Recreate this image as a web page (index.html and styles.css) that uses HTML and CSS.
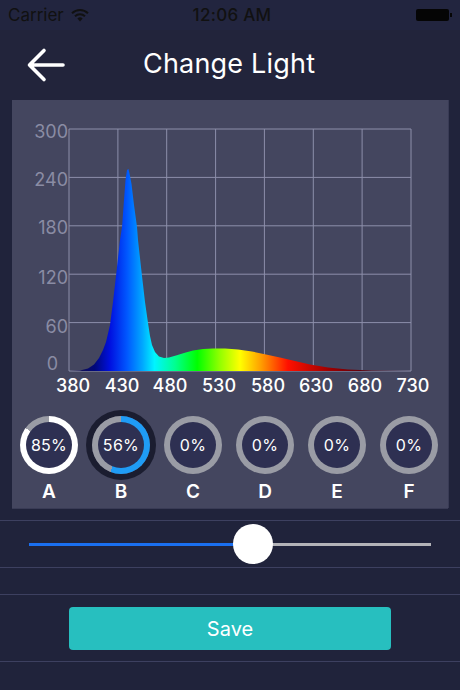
FILE: index.html
```html
<!DOCTYPE html>
<html lang="en">
  <head>
    <meta http-equiv="Content-Type" content="text/html;charset=utf-8" />
    <meta name="viewport" content="width=device-width, initial-scale=1.0" />
    <title>Change Light</title>
    <link rel="stylesheet" href="styles.css">
  </head>
  <body>
    <div class="status-bar">
      <span class="status-bar__carrier">
        Carrier
        <svg class="status-bar__wifi" viewBox="0 0 18 14" width="18" height="14">
          <path d="M1 5.2a11.5 11.5 0 0 1 16 0" fill="none" stroke="#111" stroke-width="2" />
          <path d="M4 8.2a7.2 7.2 0 0 1 10 0" fill="none" stroke="#111" stroke-width="2" />
          <path d="M9 13.5l-2.6-2.9a3.6 3.6 0 0 1 5.2 0z" fill="#111" />
        </svg>
      </span>
      <span class="status-bar__time">12:06 AM</span>
      <span class="status-bar__battery"></span>
    </div>

    <div class="nav">
      <button class="nav__back" aria-label="back">
        <svg viewBox="0 0 40 36" width="40" height="36">
          <path d="M37 18H4M18 3.5L3.5 18L18 32.5" fill="none" stroke="#fff" stroke-width="3.6" stroke-linecap="round" stroke-linejoin="round" />
        </svg>
      </button>
      <h1 class="nav__title">Change Light</h1>
    </div>

    <div class="panel">
      <svg class="panel__chart" viewBox="12 100 436 300" width="436" height="300">
        <defs>
          <linearGradient id="spectrum" gradientUnits="userSpaceOnUse" x1="69" y1="0" x2="411" y2="0">
            <stop offset="0" stop-color="#1a1038" />
            <stop offset="0.075" stop-color="#00087a" />
            <stop offset="0.12" stop-color="#0010e0" />
            <stop offset="0.17" stop-color="#0058ff" />
            <stop offset="0.215" stop-color="#00a8ff" />
            <stop offset="0.25" stop-color="#00f4ff" />
            <stop offset="0.31" stop-color="#00ff90" />
            <stop offset="0.375" stop-color="#00ff00" />
            <stop offset="0.44" stop-color="#90ff00" />
            <stop offset="0.5" stop-color="#ffff00" />
            <stop offset="0.56" stop-color="#ffa000" />
            <stop offset="0.64" stop-color="#ff1000" />
            <stop offset="0.76" stop-color="#a00000" />
            <stop offset="0.9" stop-color="#400010" />
            <stop offset="1" stop-color="#201430" />
          </linearGradient>
        </defs>
        <g class="chart__grid">
          <line x1="69" y1="129" x2="411" y2="129" />
          <line x1="69" y1="177.4" x2="411" y2="177.4" />
          <line x1="69" y1="225.8" x2="411" y2="225.8" />
          <line x1="69" y1="274.2" x2="411" y2="274.2" />
          <line x1="69" y1="322.6" x2="411" y2="322.6" />
          <line x1="69" y1="371" x2="411" y2="371" />
          <line x1="69" y1="129" x2="69" y2="371" />
          <line x1="117.9" y1="129" x2="117.9" y2="371" />
          <line x1="166.7" y1="129" x2="166.7" y2="371" />
          <line x1="215.6" y1="129" x2="215.6" y2="371" />
          <line x1="264.4" y1="129" x2="264.4" y2="371" />
          <line x1="313.3" y1="129" x2="313.3" y2="371" />
          <line x1="362.1" y1="129" x2="362.1" y2="371" />
          <line x1="411" y1="129" x2="411" y2="371" />
        </g>
        <path
          fill="url(#spectrum)"
          d="M69 371 L80 370.6 L88 368.5 L94 364.5 L99 358 L103 350 L106 342 L110 325 L113 302 L116 276 L118 258 L120 240 L122 227 L124 200 L125.5 180 L127 170 L128.5 169 L130 176 L131.5 184 L134 205 L137 227 L138 240 L140 258 L142 276 L145 302 L148 323 L150 336 L152 345 L155 352 L159 356.5 L164 358 L169 357.5 L176 355.5 L184 353 L193 350.5 L203 349 L213 348.5 L225 348.5 L238 349.5 L252 351.5 L266 354.5 L280 357.5 L295 361 L310 364.5 L328 367.4 L348 369.4 L372 370.5 L411 371 Z"
        />
        <g class="chart__y-labels">
          <text x="68" y="138">300</text>
          <text x="68" y="186">240</text>
          <text x="68" y="234">180</text>
          <text x="68" y="284">120</text>
          <text x="68" y="333">60</text>
          <text x="58" y="370">0</text>
        </g>
        <g class="chart__x-labels">
          <text x="73" y="392">380</text>
          <text x="122" y="392">430</text>
          <text x="170" y="392">480</text>
          <text x="219" y="392">530</text>
          <text x="268" y="392">580</text>
          <text x="316" y="392">630</text>
          <text x="365" y="392">680</text>
          <text x="413" y="392">730</text>
        </g>
      </svg>

      <div class="channels">
        <div class="channel">
          <div class="channel__ring channel__ring--white" style="--level: 85%">
            <span class="channel__value">85%</span>
          </div>
          <span class="channel__name">A</span>
        </div>
        <div class="channel channel--selected">
          <div class="channel__ring channel__ring--blue" style="--level: 56%">
            <span class="channel__value">56%</span>
          </div>
          <span class="channel__name">B</span>
        </div>
        <div class="channel">
          <div class="channel__ring" style="--level: 0%">
            <span class="channel__value">0%</span>
          </div>
          <span class="channel__name">C</span>
        </div>
        <div class="channel">
          <div class="channel__ring" style="--level: 0%">
            <span class="channel__value">0%</span>
          </div>
          <span class="channel__name">D</span>
        </div>
        <div class="channel">
          <div class="channel__ring" style="--level: 0%">
            <span class="channel__value">0%</span>
          </div>
          <span class="channel__name">E</span>
        </div>
        <div class="channel">
          <div class="channel__ring" style="--level: 0%">
            <span class="channel__value">0%</span>
          </div>
          <span class="channel__name">F</span>
        </div>
      </div>
    </div>

    <div class="rows">
      <div class="row row--slider">
        <div class="slider">
          <span class="slider__fill" style="width: 224px"></span>
          <span class="slider__thumb"></span>
          <span class="slider__rest"></span>
        </div>
      </div>
      <div class="row row--empty"></div>
      <div class="row row--button">
        <button class="button--save">Save</button>
      </div>
    </div>
  </body>
</html>
```

FILE: styles.css
```css
body {
  margin: 0;
  width: 460px;
  height: 690px;
  overflow: hidden;
  background-color: #20233b;
  font-family: Inter, "Noto Sans", sans-serif;
  color: #fff;
}
.status-bar {
  display: flex;
  align-items: center;
  justify-content: space-between;
  height: 30px;
  padding: 0 9px 0 8px;
  font-size: 17px;
  color: #111;
  background-color: #22253f;
}
.status-bar__carrier {
  display: flex;
  align-items: center;
  gap: 7px;
  width: 120px;
}
.status-bar__time {
  font-weight: 500;
  letter-spacing: 0.3px;
}
.status-bar__battery {
  position: relative;
  width: 33px;
  height: 12px;
  margin-left: 80px;
  margin-right: 2px;
  border-radius: 2px;
  background-color: #050505;
}
.status-bar__battery::after {
  content: "";
  position: absolute;
  right: -3px;
  top: 4px;
  width: 2px;
  height: 4px;
  background-color: #050505;
}
.nav {
  display: flex;
  align-items: center;
  height: 70px;
  padding-left: 26px;
  background-color: #22243b;
}
.nav__back {
  display: flex;
  padding: 0;
  border: 0;
  background: none;
}
.nav__title {
  margin: -4px 0 0 77px;
  font-size: 27px;
  font-weight: 400;
  letter-spacing: 0.2px;
}
.panel {
  height: 408px;
  margin: 0 12px;
  background-color: #44465f;
  box-shadow: 1px 0 0 #393b55, 0 1px 0 #393b55;
}
.panel__chart {
  display: block;
}
.chart__grid line {
  stroke: #8d8fab;
  stroke-width: 1;
}
.chart__y-labels text {
  fill: #8a8ca4;
  font-size: 18px;
  text-anchor: end;
}
.chart__x-labels text {
  fill: #fff;
  font-size: 18px;
  font-weight: 500;
  text-anchor: middle;
}
.channels {
  display: flex;
  gap: 14px;
  margin-top: 16px;
  padding-left: 8px;
}
.channel {
  display: flex;
  flex-direction: column;
  align-items: center;
  width: 58px;
}
.channel__ring {
  display: flex;
  align-items: center;
  justify-content: center;
  width: 58px;
  height: 58px;
  border-radius: 50%;
  background: conic-gradient(#9a9ca5 0 100%);
}
.channel__ring--white {
  background: conic-gradient(#fff 0 var(--level), #9a9ca5 0);
}
.channel__ring--blue {
  background: conic-gradient(#1f9cf6 0 var(--level), #9a9ca5 0);
}
.channel--selected .channel__ring {
  box-shadow: 0 0 0 6px #1b1d30;
}
.channel__value {
  display: flex;
  align-items: center;
  justify-content: center;
  width: 46px;
  height: 46px;
  border-radius: 50%;
  background-color: #2e3052;
  font-size: 16px;
  letter-spacing: 0.3px;
}
.channel__name {
  margin-top: 6px;
  font-size: 19px;
  font-weight: 600;
}
.rows {
  margin-top: 12px;
  border-bottom: 1px solid #3d4060;
}
.row {
  border-top: 1px solid #3d4060;
}
.row--slider {
  display: flex;
  align-items: center;
  height: 46px;
  padding: 0 29px;
}
.row--empty {
  height: 26px;
}
.row--button {
  display: flex;
  justify-content: center;
  height: 67px;
  padding-top: 12px;
  box-sizing: border-box;
}
.slider {
  display: flex;
  align-items: center;
  width: 402px;
}
.slider__fill {
  height: 3px;
  background-color: #1a6ff0;
}
.slider__thumb {
  flex: none;
  width: 40px;
  height: 40px;
  margin: 0 -20px;
  border-radius: 50%;
  background-color: #fff;
  position: relative;
}
.slider__rest {
  flex: 1;
  height: 3px;
  background-color: #b3b3b8;
}
.button--save {
  width: 322px;
  height: 43px;
  border: 0;
  border-radius: 4px;
  background-color: #27bfbf;
  color: #fff;
  font-family: Inter, "Noto Sans", sans-serif;
  font-size: 20px;
}
```
